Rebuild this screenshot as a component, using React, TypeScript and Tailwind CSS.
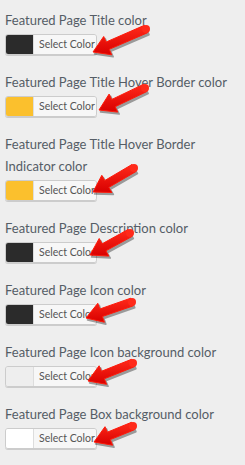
import React from 'react';

const fields = [
  { label: 'Featured Page Title color', swatch: 'bg-[#2b2b2b]' },
  { label: 'Featured Page Title Hover Border color', swatch: 'bg-[#fbc02d]' },
  { label: 'Featured Page Title Hover Border', label2: 'Indicator color', swatch: 'bg-[#fbc02d]' },
  { label: 'Featured Page Description color', swatch: 'bg-[#2b2b2b]' },
  { label: 'Featured Page Icon color', swatch: 'bg-[#2b2b2b]' },
  { label: 'Featured Page Icon background color', swatch: 'bg-[#eeeeee]' },
  { label: 'Featured Page Box background color', swatch: 'bg-white' },
];

// tail -> tip of each annotation arrow
const arrows: [number, number, number, number][] = [
  [146, 29, 93, 52],
  [145, 88, 99, 110],
  [134, 168, 93, 192],
  [130, 233, 90, 255],
  [132, 302, 86, 318],
  [133, 363, 88, 381],
  [133, 426, 94, 442],
];

function arrowPoints(sx: number, sy: number, tx: number, ty: number) {
  const dx = tx - sx;
  const dy = ty - sy;
  const len = Math.hypot(dx, dy);
  const ux = dx / len;
  const uy = dy / len;
  const nx = -uy;
  const ny = ux;
  const head = 16;
  const hw = 10;
  const sw = 4;
  const bx = tx - ux * head;
  const by = ty - uy * head;
  const p = (x: number, y: number) => `${x.toFixed(1)},${y.toFixed(1)}`;
  return [
    p(sx + nx * sw, sy + ny * sw),
    p(bx + nx * sw, by + ny * sw),
    p(bx + nx * hw, by + ny * hw),
    p(tx, ty),
    p(bx - nx * hw, by - ny * hw),
    p(bx - nx * sw, by - ny * sw),
    p(sx - nx * sw, sy - ny * sw),
  ].join(' ');
}

function ColorButton({ swatch }: { swatch: string }) {
  return (
    <div className="flex h-[21px] w-[92px] overflow-hidden rounded-[3px] border border-[#cccccc] shadow-[0_1px_0_#cccccc]">
      <div className={`w-[27px] shrink-0 ${swatch}`} />
      <div className="flex flex-1 items-center whitespace-nowrap border-l border-[#dddddd] bg-[#f7f7f7] pl-[5px] text-[10.5px] text-[#555555]">
        Select Color
      </div>
    </div>
  );
}

export default function App() {
  return (
    <div className="relative h-[465px] w-[245px] bg-[#eeeeee] font-['Lato',sans-serif]">
      <div className="flex flex-col gap-4 px-[5px] pt-[9px]">
        {fields.map((f) => (
          <div key={f.label + (f.label2 ?? '')} className="flex flex-col gap-[3px]">
            <div className="whitespace-nowrap text-[13px] leading-[22px] text-[#555d66]">
              {f.label}
              {f.label2 && (
                <>
                  <br />
                  {f.label2}
                </>
              )}
            </div>
            <ColorButton swatch={f.swatch} />
          </div>
        ))}
      </div>

      <svg className="pointer-events-none absolute inset-0" width="245" height="465" viewBox="0 0 245 465">
        <defs>
          <linearGradient id="red" x1="0" y1="0" x2="0" y2="1">
            <stop offset="0" stopColor="#ff2a1a" />
            <stop offset="1" stopColor="#d80000" />
          </linearGradient>
        </defs>
        {arrows.map(([sx, sy, tx, ty], i) => (
          <g key={i}>
            <polygon
              points={arrowPoints(sx + 1.5, sy + 2, tx + 1.5, ty + 2)}
              fill="#000"
              opacity="0.35"
              strokeLinejoin="round"
              stroke="#000"
              strokeWidth="1.5"
            />
            <polygon points={arrowPoints(sx, sy, tx, ty)} fill="url(#red)" stroke="#ff1a0a" strokeWidth="1" strokeLinejoin="round" />
            <circle cx={sx} cy={sy} r="4" fill="#ff2a1a" />
          </g>
        ))}
      </svg>
    </div>
  );
}
